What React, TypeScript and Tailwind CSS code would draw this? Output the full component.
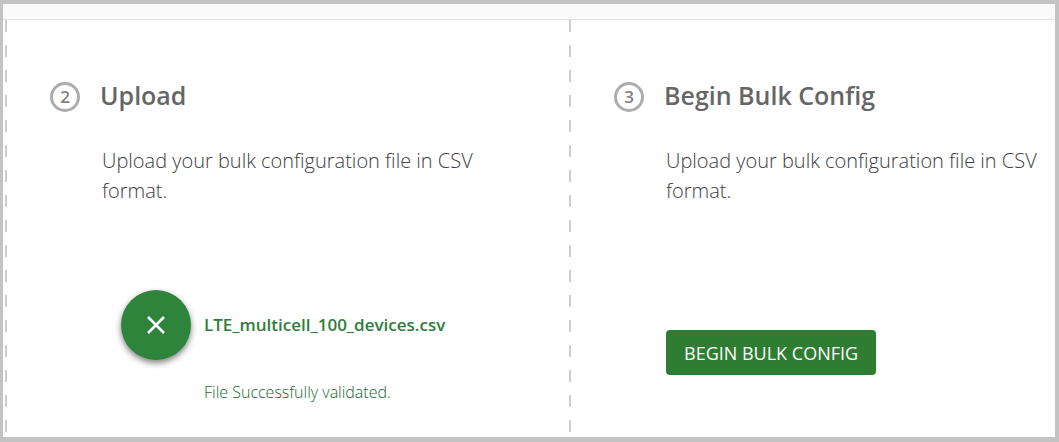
import type { ReactNode } from "react";

type StepProps = {
  number: number;
  title: string;
  description: string;
  children: ReactNode;
};

function Step({ number, title, description, children }: StepProps) {
  return (
    <section className="flex flex-col bg-[repeating-linear-gradient(to_bottom,#cdcdcd_0_12px,transparent_12px_25px)] bg-[length:2px_100%] bg-no-repeat pt-[62px] pr-4 pl-[45px]">
      <header className="flex items-start gap-5">
        <span className="flex size-[30px] shrink-0 items-center justify-center rounded-full border-3 border-[#adadad] text-[17px] font-semibold text-[#808080]">
          {number}
        </span>
        <h2 className="text-[25px] leading-[26px] font-semibold text-[#666666]">{title}</h2>
      </header>
      <p className="mt-[34px] ml-[52px] max-w-[390px] text-xl leading-[30px] font-light text-[#404040]">
        {description}
      </p>
      {children}
    </section>
  );
}

export default function App() {
  return (
    <main className="flex min-h-screen flex-col border-t-4 border-r-4 border-b-5 border-l-3 border-[#c3c3c3] bg-white font-['Open_Sans',sans-serif]">
      <div className="h-4 border-b border-[#e2e2e2] bg-[#fafafa]" />
      <div className="grid flex-1 grid-cols-[564fr_486fr] pl-0.5">
        <Step
          number={2}
          title="Upload"
          description="Upload your bulk configuration file in CSV format."
        >
          <div className="mt-[84px] ml-[71px] grid grid-cols-[70px_1fr] items-center gap-x-[13px] gap-y-5 text-[#2f7d3b]">
            <button
              type="button"
              aria-label="Remove file"
              className="flex size-[70px] items-center justify-center rounded-full bg-[#2e843b] text-white shadow-[0_3px_6px_rgba(0,0,0,0.5)]"
            >
              <svg viewBox="0 0 18 18" className="size-[18px]" aria-hidden="true">
                <path d="M1 1L17 17M17 1L1 17" stroke="currentColor" strokeWidth="2.6" fill="none" />
              </svg>
            </button>
            <span className="text-[17px] font-semibold">LTE_multicell_100_devices.csv</span>
            <p className="col-start-2 text-base font-light text-[#15692a]">File Successfully validated.</p>
          </div>
        </Step>
        <Step
          number={3}
          title="Begin Bulk Config"
          description="Upload your bulk configuration file in CSV format."
        >
          <button
            type="button"
            className="mt-[124px] ml-[52px] h-[45px] self-start rounded bg-[#2f7d32] px-[18px] text-lg text-white"
          >
            BEGIN BULK CONFIG
          </button>
        </Step>
      </div>
    </main>
  );
}
